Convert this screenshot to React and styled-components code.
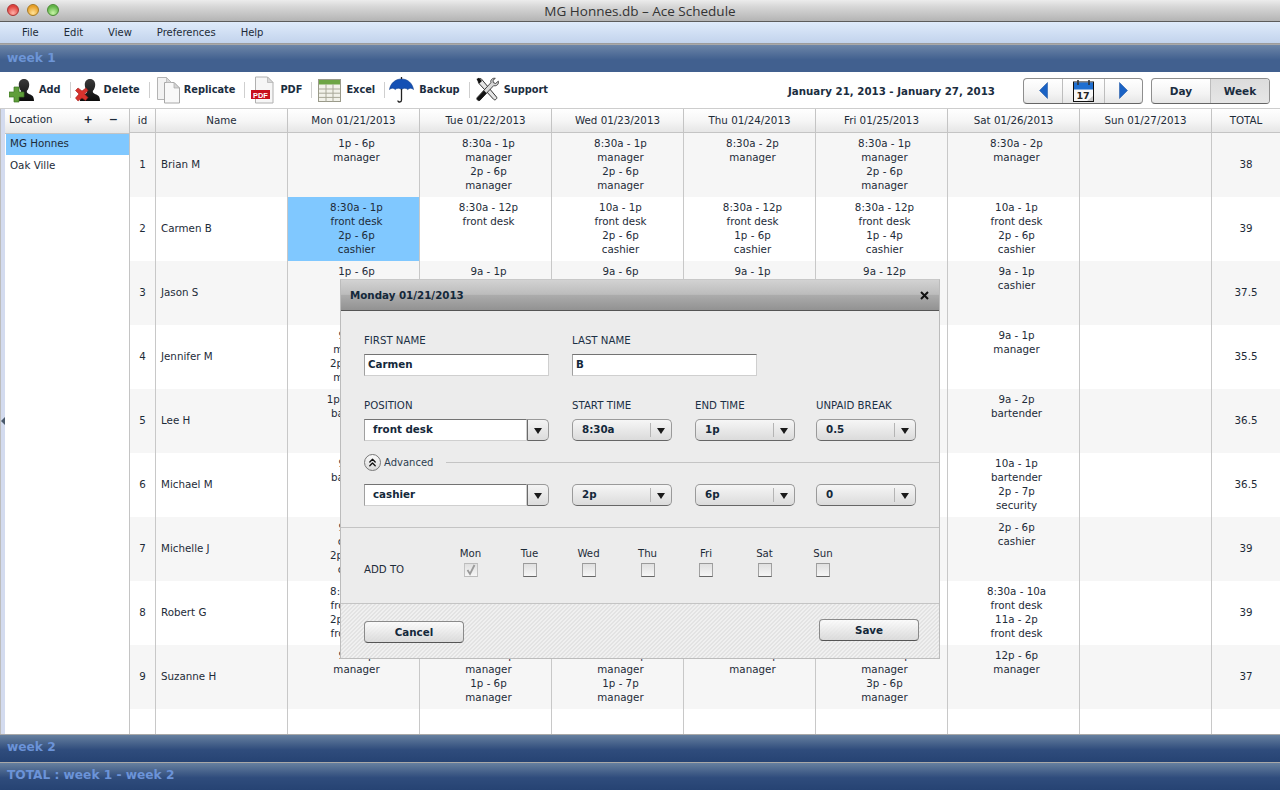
import React from 'react';
import styled, { createGlobalStyle } from 'styled-components';
import { ChevronsUp } from 'lucide-react';

const GlobalStyle = createGlobalStyle`
  html, body { margin: 0; padding: 0; height: 100%; overflow: hidden; }
  body { font-family: "DejaVu Sans", Verdana, sans-serif; font-size: 10.3px; color: #1d2b38; background: #fff; }
  * { box-sizing: border-box; }
`;

const Page = styled.div`
  position: relative;
  width: 1280px;
  height: 790px;
  display: flex;
  flex-direction: column;
  overflow: hidden;
`;

const TitleBar = styled.div`
  height: 22px;
  flex: none;
  display: flex;
  align-items: center;
  justify-content: center;
  position: relative;
  background: linear-gradient(#ececec, #d8d8d8 30%, #b4b4b4);
  border-bottom: 1px solid #5c5c5c;
  font-family: "Open Sans", sans-serif;
  font-size: 13.5px;
  color: #333;
`;

const Lights = styled.div`
  position: absolute;
  left: 7px;
  top: 4px;
  display: flex;
  gap: 8px;
`;

const Light = styled.span`
  width: 12px;
  height: 12px;
  border-radius: 50%;
  border: 1px solid ${p => p.$edge};
  background: radial-gradient(circle at 50% 80%, ${p => p.$glow}, ${p => p.$color} 70%);
`;

const MenuBar = styled.div`
  height: 22px;
  flex: none;
  display: flex;
  align-items: center;
  gap: 25px;
  padding: 0 0 1px 22px;
  background: linear-gradient(#dfebfb, #c2d3ec);
  border-bottom: 1px solid #9c9c9c;
  font-size: 10px;
`;

const WeekBar = styled.div`
  height: 28px;
  flex: none;
  display: flex;
  align-items: center;
  padding: 0 0 ${p => (p.$dark ? 3 : 1)}px 7px;
  font-size: 12.2px;
  font-weight: bold;
  color: ${p => (p.$dark ? '#6b93d8' : '#6d95d6')};
  background: ${p => p.$dark
    ? 'linear-gradient(#66809f, #2f4c7c 55%, #264373)'
    : 'linear-gradient(#6d86a8, #41608f 55%, #41608f)'};
  border-top: 1px solid #a8a8a8;
`;

const Toolbar = styled.div`
  height: 36px;
  flex: none;
  display: flex;
  align-items: center;
  background: #fff;
  padding-left: 9px;
`;

const ToolButton = styled.div`
  display: flex;
  align-items: center;
  gap: ${p => p.$gap}px;
  font-weight: bold;
  font-size: 9.8px;
  color: #1b2d40;
`;

const ToolLabel = styled.span`
  margin-bottom: 2px;
`;

const ToolSep = styled.span`
  width: 1px;
  height: 16px;
  background: #cfcfcf;
  margin: 0 ${p => p.$right}px 0 9px;
`;

const DateRange = styled.div`
  margin: 2px 28px 0 auto;
  font-weight: bold;
  font-size: 10.25px;
  color: #1b2d40;
`;

const ButtonGroup = styled.div`
  display: flex;
  height: 26px;
  margin-top: 1px;
  border: 1px solid #8e8e8e;
  border-bottom-color: #666;
  border-radius: 4px;
  overflow: hidden;
  background: linear-gradient(#fff, #f4f4f4 60%, #e6e6e6);
  margin-right: ${p => p.$right}px;
`;

const GroupItem = styled.div`
  width: ${p => p.$width}px;
  display: flex;
  align-items: center;
  justify-content: center;
  font-weight: bold;
  font-size: 10.5px;
  color: #1b2d40;
  border-left: ${p => (p.$first ? 'none' : '1px solid #bdbdbd')};
  background: ${p => (p.$active ? 'linear-gradient(#dcdcdc, #e6e6e6)' : 'transparent')};
`;

const Main = styled.div`
  flex: 1;
  min-height: 0;
  display: flex;
  position: relative;
  border-top: 1px solid #cdcdcd;
`;

const Splitter = styled.div`
  width: 5px;
  flex: none;
  background: #d3dbef;
  border-left: 1px solid #bdbdbd;
  position: relative;
`;

const SplitterArrow = styled.span`
  position: absolute;
  left: 0;
  top: 308px;
  border: 4px solid transparent;
  border-left-width: 0;
  border-right-color: #4a5a6c;
`;

const Sidebar = styled.div`
  width: 125px;
  flex: none;
  display: flex;
  flex-direction: column;
  border-right: 1px solid #c4c4c4;
`;

const HeaderGradient = 'linear-gradient(#fff, #f6f6f6 50%, #e6e6e6)';

const SideHead = styled.div`
  height: 25px;
  flex: none;
  display: flex;
  align-items: center;
  padding: 0 11px 4px 4px;
  background: ${HeaderGradient};
  border-bottom: 1px solid #c4c4c4;
`;

const SideTitle = styled.span`
  flex: 1;
`;

const SideAction = styled.span`
  font-weight: bold;
  font-size: 11px;
  margin-left: 16px;
`;

const SideItem = styled.div`
  height: 21px;
  margin-left: 1px;
  display: flex;
  align-items: center;
  padding: 0 0 ${p => (p.$selected ? 3 : 1)}px 4px;
  background: ${p => (p.$selected ? '#80c8ff' : 'transparent')};
`;

const Schedule = styled.div`
  flex: 1;
  min-width: 0;
  display: flex;
  flex-direction: column;
`;

const GridRow = styled.div`
  display: grid;
  grid-template-columns: 26px repeat(8, 132px) 68px;
  flex: ${p => (p.$fill ? '1' : 'none')};
  height: ${p => (p.$fill ? 'auto' : `${p.$height}px`)};
  background: ${p => p.$bg || 'transparent'};
  border-bottom: ${p => (p.$head ? '1px solid #c4c4c4' : 'none')};
`;

const HeadCell = styled.div`
  display: flex;
  align-items: center;
  justify-content: center;
  border-right: 1px solid #c4c4c4;
  background: ${HeaderGradient};
  padding-bottom: 1px;
  &:last-child { border-right: none; }
`;

const Cell = styled.div`
  border-right: 1px solid #c8c8c8;
  display: flex;
  align-items: ${p => (p.$middle ? 'center' : 'flex-start')};
  justify-content: ${p => (p.$left ? 'flex-start' : 'center')};
  padding: ${p => (p.$middle ? '0 0 2px' : '3px 0 0 6px')};
  padding-left: ${p => (p.$left ? '5px' : undefined)};
  background: ${p => (p.$selected ? '#80c8ff' : 'transparent')};
  &:last-child { border-right: none; }
`;

const Shift = styled.div`
  text-align: center;
  line-height: 14px;
  white-space: pre-line;
`;

const Dialog = styled.div`
  position: absolute;
  left: 340px;
  top: 279px;
  width: 600px;
  height: 380px;
  display: flex;
  flex-direction: column;
  background: #ececec;
  border: 1px solid #bcbcbc;
  border-top-color: #c8c8c8;
`;

const DialogHead = styled.div`
  height: 31px;
  flex: none;
  display: flex;
  align-items: center;
  justify-content: space-between;
  padding: 0 10px 0 9px;
  background: linear-gradient(#d2d2d2, #bcbcbc 48%, #acacac 50%, #929292);
  border-bottom: 1px solid #555;
  font-weight: bold;
  font-size: 10.3px;
  color: #14283a;
`;

const CloseMark = styled.svg`
  width: 9px;
  height: 9px;
`;

const FormBody = styled.div`
  flex: none;
  height: 217px;
  padding: 24px 0 0 23px;
  display: flex;
  flex-direction: column;
  border-bottom: 1px solid #c4c4c4;
`;

const FormRow = styled.div`
  display: flex;
  margin-bottom: ${p => p.$bottom || 0}px;
`;

const Field = styled.div`
  width: ${p => p.$width}px;
  margin-right: ${p => p.$gap || 0}px;
  display: flex;
  flex-direction: column;
  gap: 8px;
`;

const FieldLabel = styled.label`
  height: 11px;
  line-height: 11px;
  font-size: 10.2px;
  color: #1b3045;
`;

const TextBox = styled.div`
  height: 22px;
  display: flex;
  align-items: center;
  padding: 0 0 2px 3px;
  background: #fff;
  border: 1px solid #cfcfcf;
  border-top-color: #737373;
  border-left-color: #a0a0a0;
  font-weight: bold;
  color: #14283a;
`;

const Combo = styled.div`
  height: 22px;
  display: flex;
`;

const ComboText = styled(TextBox)`
  flex: 1;
  padding-left: 8px;
`;

const ComboArrow = styled.div`
  width: 22px;
  display: flex;
  align-items: center;
  justify-content: center;
  border: 1px solid #9a9a9a;
  border-bottom-color: #666;
  border-left-color: #6a6a6a;
  border-radius: 0 5px 5px 0;
  background: linear-gradient(#f4f4f4, #dcdcdc);
`;

const Caret = styled.span`
  border: 4px solid transparent;
  border-top: 6px solid #1a1a1a;
  border-bottom-width: 0;
  margin-top: 1px;
`;

const SelectBox = styled.div`
  height: 22px;
  display: flex;
  align-items: stretch;
  border: 1px solid #9a9a9a;
  border-bottom-color: #666;
  border-radius: 5px;
  background: linear-gradient(#f6f6f6, #dbdbdb);
  font-weight: bold;
  color: #14283a;
`;

const SelectValue = styled.span`
  flex: 1;
  display: flex;
  align-items: center;
  padding: 0 0 2px 9px;
`;

const SelectArrow = styled.span`
  width: 21px;
  display: flex;
  align-items: center;
  justify-content: center;
  position: relative;
  &::before {
    content: '';
    position: absolute;
    left: 0;
    top: 3px;
    bottom: 3px;
    width: 1px;
    background: #b4b4b4;
  }
`;

const AdvancedRow = styled.div`
  height: 18px;
  margin: 12px 0 13px;
  display: flex;
  align-items: center;
  gap: 3px;
  font-size: 10px;
  color: #2c3e50;
`;

const RoundToggle = styled.span`
  width: 17px;
  height: 17px;
  border-radius: 50%;
  display: flex;
  align-items: center;
  justify-content: center;
  border: 1px solid #777;
  background: linear-gradient(#fafafa, #dcdcdc);
`;

const AdvancedLine = styled.span`
  flex: 1;
  height: 1px;
  margin-left: 10px;
  background: #c4c4c4;
`;

const AddSection = styled.div`
  flex: 1;
  display: flex;
  padding: 20px 0 0 23px;
`;

const AddLabel = styled.div`
  width: 77px;
  padding-top: 16px;
  font-size: 10.2px;
`;

const DayColumn = styled.div`
  width: ${p => p.$width}px;
  display: flex;
  flex-direction: column;
  align-items: center;
  gap: 3px;
  line-height: 12px;
  font-size: 10.2px;
`;

const DayBox = styled.span`
  width: 14px;
  height: 14px;
  display: flex;
  align-items: center;
  justify-content: center;
  border: 1px solid ${p => (p.$checked ? '#c2c2c2' : '#a0a0a0')};
  border-top-color: ${p => (p.$checked ? '#bbb' : '#9a9a9a')};
  border-bottom-color: ${p => (p.$checked ? '#bbb' : '#666')};
  background: linear-gradient(#e0e0e0, #f6f6f6);
`;

const DialogFoot = styled.div`
  height: 55px;
  flex: none;
  display: flex;
  align-items: flex-start;
  justify-content: space-between;
  padding: 15px 20px 0 23px;
  border-top: 1px solid #c4c4c4;
  background: repeating-linear-gradient(135deg, #f0f0f0 0, #f0f0f0 1.414px, #e3e3e3 1.414px, #e3e3e3 2.828px);
`;

const FootButton = styled.div`
  width: 100px;
  height: 22px;
  display: flex;
  align-items: center;
  justify-content: center;
  padding-bottom: 1px;
  border: 1px solid #8a8a8a;
  border-bottom-color: #555;
  border-radius: 4px;
  margin-top: ${p => p.$top || 0}px;
  background: linear-gradient(rgba(255,255,255,.75), rgba(215,215,215,.8));
  font-weight: bold;
  font-size: 10.3px;
  color: #14283a;
`;

const PersonIcon = ({ kind }) => (
  <svg width="26" height="26" viewBox="0 0 26 26">
    <defs>
      <linearGradient id={`body-${kind}`} x1="0" y1="0" x2="0" y2="1">
        <stop offset="0" stopColor="#3a3a3a" />
        <stop offset="1" stopColor="#0c0c0c" />
      </linearGradient>
    </defs>
    <path
      d="M15 2c3.4 0 5.4 2.6 5.2 6-.1 2.400-1 4.500-2.300 5.800-.4 1.700.4 2.600 2.600 3.400 2.300.8 4.500 1.700 4.500 6.800H5c0-5 2.100-6 4.400-6.800 2.200-.8 3-1.700 2.600-3.400C10.700 12.500 9.900 10.400 9.800 8 9.600 4.600 11.600 2 15 2z"
      fill={`url(#body-${kind})`}
    />
    {kind === 'add' ? (
      <path d="M5 10h5v5h5v5h-5v5H5v-5H0v-5h5z" fill="#5f9e3a" stroke="#3d7423" strokeWidth="0.7" />
    ) : (
      <path d="M3 11l4 3 4-3 2 2.500-3.500 3.500 3.500 3.500-2.500 3L7 21l-4 3-2.500-3L4 17 .5 13.500z" fill="#d8322d" stroke="#a31d1a" strokeWidth="0.6" />
    )}
  </svg>
);

const CopyIcon = () => (
  <svg width="25" height="28" viewBox="0 0 25 28">
    <path d="M1.500 1.500h9l5 5v17h-14z" fill="#f2f2f2" stroke="#b4b4b4" />
    <path d="M8.500 6.500h9.500l5.500 5.500v15H8.500z" fill="#f8f8f8" stroke="#a8a8a8" />
    <path d="M18 6.500V12h5.500z" fill="#d4d4d4" stroke="#a8a8a8" strokeWidth="0.7" />
    <path d="M10.500 1.500v5h5z" fill="#d8d8d8" stroke="#b4b4b4" strokeWidth="0.7" />
  </svg>
);

const PdfIcon = () => (
  <svg width="23" height="28" viewBox="0 0 23 28">
    <path d="M4.500 1h12l5.500 5.500V27H4.500z" fill="#f6f6f6" stroke="#b0b0b0" />
    <path d="M16.500 1v5.500H22z" fill="#d8d8d8" stroke="#b0b0b0" strokeWidth="0.7" />
    <rect x="0" y="14" width="19" height="9" fill="#c8101e" />
    <text x="9.500" y="21.600" textAnchor="middle" fontSize="7.400" fontWeight="bold" fill="#fff" fontFamily="Liberation Sans, sans-serif">PDF</text>
  </svg>
);

const SheetIcon = () => (
  <svg width="23" height="23" viewBox="0 0 23 23">
    <rect x="0.500" y="0.500" width="22" height="22" fill="#f2f2ea" stroke="#9a9a8a" />
    <rect x="1" y="1" width="21" height="4.500" fill="#6da544" />
    <path d="M1 10h21M1 14.200h21M1 18.400h21M8 5v17.500M15 5v17.500" stroke="#a8a898" strokeWidth="1" fill="none" />
  </svg>
);

const UmbrellaIcon = () => (
  <svg width="25" height="28" viewBox="0 0 25 28">
    <path d="M12.500 3C6 3 1.500 7.500.5 13.500c1.800-1.700 4-1.700 5.800 0 1.600-1.700 4.200-1.700 6.200 0 2-1.700 4.600-1.700 6.200 0 1.800-1.700 4-1.700 5.800 0C23.500 7.500 19 3 12.500 3z" fill="#1450b4" stroke="#0c3a8c" strokeWidth="0.6" />
    <path d="M12.500 1v2M12.500 13v11c0 2.600-3.600 2.600-3.600.4" fill="none" stroke="#222" strokeWidth="1.300" />
  </svg>
);

const ToolsIcon = () => (
  <svg width="25" height="26" viewBox="0 0 25 26">
    <path d="M3 3l3-1.500 15.500 18.500c1.200 1.400-1.400 3.800-2.800 2.400L3.500 6z" fill="#e4e4e4" stroke="#333" />
    <path d="M1.500 2L4 .8l3 3.200-2.600 2.400z" fill="#111" />
    <path d="M20.300 1.400c-2.700-.8-5.200 1.600-4.400 4.300L2.200 20.500c-1.500 1.700 1.200 4.200 2.800 2.600L18.700 8.600c2.800.9 5.500-1.600 4.600-4.400l-2.700 2.300-2.300-.9-.3-2.400z" fill="#d8d8d8" stroke="#333" strokeWidth="0.9" />
    <path d="M9 13.500L2.400 20.600c-1.500 1.700 1.200 4.200 2.800 2.600l6.400-6.900z" fill="#141414" />
  </svg>
);

const CalendarIcon = () => (
  <svg width="22" height="23" viewBox="0 0 22 23">
    <rect x="0.500" y="3" width="20" height="19.500" fill="#f8f8f8" stroke="#111" />
    <rect x="1" y="3.500" width="19" height="7" fill="#1f6fd0" />
    <path d="M5 1v5M16 1v5" stroke="#333" strokeWidth="1.600" fill="none" />
    <text x="10" y="20" textAnchor="middle" fontSize="9.500" fill="#222" fontFamily="DejaVu Sans, sans-serif">17</text>
    <path d="M14 22l6-5v5z" fill="#c8c8c8" />
  </svg>
);

const NavArrow = ({ flip }) => (
  <svg width="9" height="17" viewBox="0 0 9 17" style={{ transform: flip ? 'scaleX(-1)' : 'none' }}>
    <path d="M8.500.5v16L.5 8.500z" fill="#1a62c4" stroke="#164f9e" strokeWidth="0.5" />
  </svg>
);

const tools = [
  { label: 'Add', icon: <PersonIcon kind="add" />, gap: 4, after: 4 },
  { label: 'Delete', icon: <PersonIcon kind="del" />, gap: 3, after: 6 },
  { label: 'Replicate', icon: <CopyIcon />, gap: 3, after: 6 },
  { label: 'PDF', icon: <PdfIcon />, gap: 6, after: 6 },
  { label: 'Excel', icon: <SheetIcon />, gap: 5, after: 4 },
  { label: 'Backup', icon: <UmbrellaIcon />, gap: 5, after: 5 },
  { label: 'Support', icon: <ToolsIcon />, gap: 4 },
];

const columns = ['id', 'Name', 'Mon 01/21/2013', 'Tue 01/22/2013', 'Wed 01/23/2013', 'Thu 01/24/2013', 'Fri 01/25/2013', 'Sat 01/26/2013', 'Sun 01/27/2013', 'TOTAL'];

const people = [
  ['Brian M', '38', ['1p - 6p\nmanager', '8:30a - 1p\nmanager\n2p - 6p\nmanager', '8:30a - 1p\nmanager\n2p - 6p\nmanager', '8:30a - 2p\nmanager', '8:30a - 1p\nmanager\n2p - 6p\nmanager', '8:30a - 2p\nmanager', '']],
  ['Carmen B', '39', ['8:30a - 1p\nfront desk\n2p - 6p\ncashier', '8:30a - 12p\nfront desk', '10a - 1p\nfront desk\n2p - 6p\ncashier', '8:30a - 12p\nfront desk\n1p - 6p\ncashier', '8:30a - 12p\nfront desk\n1p - 4p\ncashier', '10a - 1p\nfront desk\n2p - 6p\ncashier', '']],
  ['Jason S', '37.5', ['1p - 6p\nhost', '9a - 1p\ncashier', '9a - 6p\ncashier', '9a - 1p\ncashier', '9a - 12p\ncashier', '9a - 1p\ncashier', '']],
  ['Jennifer M', '35.5', ['9a - 2p\nmanager\n2p - 6:30p\nmanager', '9a - 1p\nmanager', '9a - 1p\nmanager', '9a - 1p\nmanager', '9a - 1p\nmanager', '9a - 1p\nmanager', '']],
  ['Lee H', '36.5', ['1p - 10:30p\nbartender', '9a - 2p\nbartender', '9a - 2p\nbartender', '9a - 2p\nbartender', '9a - 2p\nbartender', '9a - 2p\nbartender', '']],
  ['Michael M', '36.5', ['9a - 2p\nbartender', '10a - 1p\nbartender', '10a - 1p\nbartender', '10a - 1p\nbartender', '10a - 1p\nbartender', '10a - 1p\nbartender\n2p - 7p\nsecurity', '']],
  ['Michelle J', '39', ['9a - 1p\ncashier\n2p - 6:30p\ncashier', '2p - 6p\ncashier', '2p - 6p\ncashier', '2p - 6p\ncashier', '2p - 6p\ncashier', '2p - 6p\ncashier', '']],
  ['Robert G', '39', ['8:30a - 1p\nfront desk\n2p - 6:30p\nfront desk', '8:30a - 1p\nfront desk', '8:30a - 1p\nfront desk', '8:30a - 1p\nfront desk', '8:30a - 1p\nfront desk', '8:30a - 10a\nfront desk\n11a - 2p\nfront desk', '']],
  ['Suzanne H', '37', ['9a - 2p\nmanager', '8:30a - 1p\nmanager\n1p - 6p\nmanager', '8:30a - 1p\nmanager\n1p - 7p\nmanager', '8:30a - 2p\nmanager', '8:30a - 1p\nmanager\n3p - 6p\nmanager', '12p - 6p\nmanager', '']],
];

const addDays = [
  { name: 'Mon', width: 59, checked: true },
  { name: 'Tue', width: 59 },
  { name: 'Wed', width: 59 },
  { name: 'Thu', width: 59 },
  { name: 'Fri', width: 58 },
  { name: 'Sat', width: 59 },
  { name: 'Sun', width: 58 },
];

const Select = ({ value }) => (
  <SelectBox>
    <SelectValue>{value}</SelectValue>
    <SelectArrow><Caret /></SelectArrow>
  </SelectBox>
);

const ShiftFields = ({ position, start, end, pause, labels }) => (
  <>
    <Field $width={185} $gap={23}>
      {labels && <FieldLabel>POSITION</FieldLabel>}
      <Combo>
        <ComboText>{position}</ComboText>
        <ComboArrow><Caret /></ComboArrow>
      </Combo>
    </Field>
    <Field $width={100} $gap={23}>
      {labels && <FieldLabel>START TIME</FieldLabel>}
      <Select value={start} />
    </Field>
    <Field $width={100} $gap={21}>
      {labels && <FieldLabel>END TIME</FieldLabel>}
      <Select value={end} />
    </Field>
    <Field $width={100}>
      {labels && <FieldLabel>UNPAID BREAK</FieldLabel>}
      <Select value={pause} />
    </Field>
  </>
);

export default function App() {
  return (
    <Page>
      <GlobalStyle />
      <TitleBar>
        <Lights>
          <Light $color="#e0443e" $glow="#ffb0a8" $edge="#a33" />
          <Light $color="#e8a028" $glow="#ffe39a" $edge="#a87a20" />
          <Light $color="#62b548" $glow="#c8f5a8" $edge="#4a8a35" />
        </Lights>
        MG Honnes.db – Ace Schedule
      </TitleBar>
      <MenuBar>
        <span>File</span>
        <span>Edit</span>
        <span>View</span>
        <span>Preferences</span>
        <span>Help</span>
      </MenuBar>
      <WeekBar>week 1</WeekBar>
      <Toolbar>
        {tools.map(tool => (
          <React.Fragment key={tool.label}>
            <ToolButton $gap={tool.gap}>{tool.icon}<ToolLabel>{tool.label}</ToolLabel></ToolButton>
            {tool.after && <ToolSep $right={tool.after} />}
          </React.Fragment>
        ))}
        <DateRange>January 21, 2013 - January 27, 2013</DateRange>
        <ButtonGroup $right={8}>
          <GroupItem $first $width={38}><NavArrow /></GroupItem>
          <GroupItem $width={42}><CalendarIcon /></GroupItem>
          <GroupItem $width={38}><NavArrow flip /></GroupItem>
        </ButtonGroup>
        <ButtonGroup $right={10}>
          <GroupItem $first $width={58}>Day</GroupItem>
          <GroupItem $active $width={59}>Week</GroupItem>
        </ButtonGroup>
      </Toolbar>
      <Main>
        <Splitter><SplitterArrow /></Splitter>
        <Sidebar>
          <SideHead>
            <SideTitle>Location</SideTitle>
            <SideAction>+</SideAction>
            <SideAction>−</SideAction>
          </SideHead>
          <SideItem $selected>MG Honnes</SideItem>
          <SideItem>Oak Ville</SideItem>
        </Sidebar>
        <Schedule>
          <GridRow $head $height={24}>
            {columns.map(col => <HeadCell key={col}>{col}</HeadCell>)}
          </GridRow>
          {people.map(([name, total, shifts], i) => (
            <GridRow key={name} $height={64} $bg={i % 2 === 0 ? '#f6f6f6' : '#fff'}>
              <Cell $middle>{i + 1}</Cell>
              <Cell $middle $left>{name}</Cell>
              {shifts.map((text, d) => (
                <Cell key={d} $selected={i === 1 && d === 0}><Shift>{text}</Shift></Cell>
              ))}
              <Cell $middle>{total}</Cell>
            </GridRow>
          ))}
          <GridRow $fill>
            {columns.map(col => <Cell key={col} />)}
          </GridRow>
        </Schedule>
      </Main>
      <WeekBar $dark>week 2</WeekBar>
      <WeekBar $dark>TOTAL : week 1 - week 2</WeekBar>

      <Dialog>
        <DialogHead>
          Monday 01/21/2013
          <CloseMark viewBox="0 0 9 9">
            <path d="M1 1l7 7M8 1L1 8" stroke="#111" strokeWidth="2" />
          </CloseMark>
        </DialogHead>
        <FormBody>
          <FormRow $bottom={24}>
            <Field $width={185} $gap={23}>
              <FieldLabel>FIRST NAME</FieldLabel>
              <TextBox>Carmen</TextBox>
            </Field>
            <Field $width={185}>
              <FieldLabel>LAST NAME</FieldLabel>
              <TextBox>B</TextBox>
            </Field>
          </FormRow>
          <FormRow>
            <ShiftFields labels position="front desk" start="8:30a" end="1p" pause="0.5" />
          </FormRow>
          <AdvancedRow>
            <RoundToggle><ChevronsUp size={13} strokeWidth={2.4} color="#111" /></RoundToggle>
            Advanced
            <AdvancedLine />
          </AdvancedRow>
          <FormRow>
            <ShiftFields position="cashier" start="2p" end="6p" pause="0" />
          </FormRow>
        </FormBody>
        <AddSection>
          <AddLabel>ADD TO</AddLabel>
          {addDays.map(day => (
            <DayColumn key={day.name} $width={day.width}>
              {day.name}
              <DayBox $checked={day.checked}>
                {day.checked && (
                  <svg width="12" height="12" viewBox="0 0 12 12">
                    <path d="M2.500 6l2.500 4 4.500-9" fill="none" stroke="#9a9a9a" strokeWidth="1.800" />
                  </svg>
                )}
              </DayBox>
            </DayColumn>
          ))}
        </AddSection>
        <DialogFoot>
          <FootButton $top={2}>Cancel</FootButton>
          <FootButton>Save</FootButton>
        </DialogFoot>
      </Dialog>
    </Page>
  );
}
